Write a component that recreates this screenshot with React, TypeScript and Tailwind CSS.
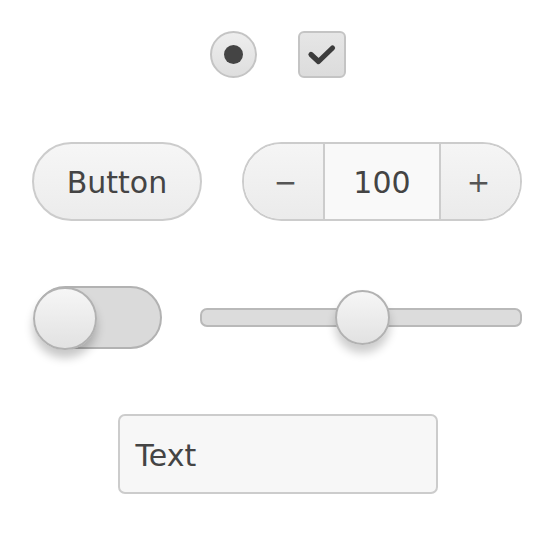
import React from "react";

const font = { fontFamily: '"DejaVu Sans", "Open Sans", sans-serif' };

export default function App() {
  return (
    <div className="w-[550px] h-[536px] bg-white text-[#444]" style={font}>
      <div className="flex flex-col w-[490px] ml-[32px] pt-[31px]">
        {/* radio + checkbox */}
        <div className="flex items-center justify-center gap-[41px] pl-[1px]">
          <div className="w-[47px] h-[47px] rounded-full border-2 border-[#c4c4c4] bg-gradient-to-b from-[#eeeeee] to-[#dedede] flex items-center justify-center">
            <div className="w-[19px] h-[19px] rounded-full bg-[#444]" />
          </div>
          <div className="w-[48px] h-[47px] rounded-[6px] border-2 border-[#c4c4c4] bg-gradient-to-b from-[#e6e6e6] to-[#dcdcdc] flex items-center justify-center">
            <svg width="30" height="24" viewBox="0 0 30 24">
              <path d="M4 11.5 L11.5 18.5 L25.5 5" fill="none" stroke="#3c3c3c" strokeWidth="5.2" strokeLinecap="round" strokeLinejoin="round" />
            </svg>
          </div>
        </div>

        {/* button + stepper */}
        <div className="flex items-center gap-[40px] mt-[64px]">
          <button className="w-[170px] h-[79px] rounded-full border-2 border-[#cccccc] bg-gradient-to-b from-[#f6f6f6] to-[#ececec] text-[30px] text-[#444] flex items-center justify-center pt-[2px]">
            Button
          </button>
          <div className="flex w-[280px] h-[79px] rounded-full border-2 border-[#cccccc] overflow-hidden">
            <div className="w-[79px] bg-gradient-to-b from-[#f5f5f5] to-[#ebebeb] flex items-center justify-center text-[28px] text-[#555] pl-[4px] pt-[2px]">
              −
            </div>
            <div className="flex-1 border-x-2 border-[#cccccc] bg-[#f9f9f9] flex items-center justify-center text-[30px] text-[#444] pt-[2px]">
              100
            </div>
            <div className="w-[79px] bg-gradient-to-b from-[#f5f5f5] to-[#ebebeb] flex items-center justify-center text-[28px] text-[#555] pr-[4px] pt-[2px]">
              +
            </div>
          </div>
        </div>

        {/* toggle + slider */}
        <div className="flex items-center gap-[40px] mt-[65px]">
          <div className="relative w-[128px] h-[63px] ml-[2px]">
            <div className="w-full h-full rounded-full border-2 border-[#b2b2b2] bg-[#dadada]" />
            <div className="absolute left-[-1px] top-[1px] w-[64px] h-[63px] rounded-full border-2 border-[#b2b2b2] bg-gradient-to-b from-[#f6f6f6] to-[#e2e2e2] shadow-[0_8px_10px_rgba(0,0,0,0.22)]" />
          </div>
          <div className="relative flex-1 h-[60px] flex items-center ml-[-2px]">
            <div className="w-full h-[19px] rounded-[7px] border-2 border-[#b9b9b9] bg-[#dcdcdc]" />
            <div className="absolute left-[135px] top-[2px] w-[55px] h-[55px] rounded-full border-2 border-[#b2b2b2] bg-gradient-to-b from-[#f6f6f6] to-[#e2e2e2] shadow-[0_8px_10px_rgba(0,0,0,0.2)]" />
          </div>
        </div>

        {/* text field */}
        <div className="flex justify-center mt-[65px] pl-[1px]">
          <div className="w-[320px] h-[80px] rounded-[7px] border-2 border-[#cccccc] bg-[#f7f7f7] flex items-center pl-[16px] pt-[3px] text-[30px] text-[#444]">
            Text
          </div>
        </div>
      </div>
    </div>
  );
}
